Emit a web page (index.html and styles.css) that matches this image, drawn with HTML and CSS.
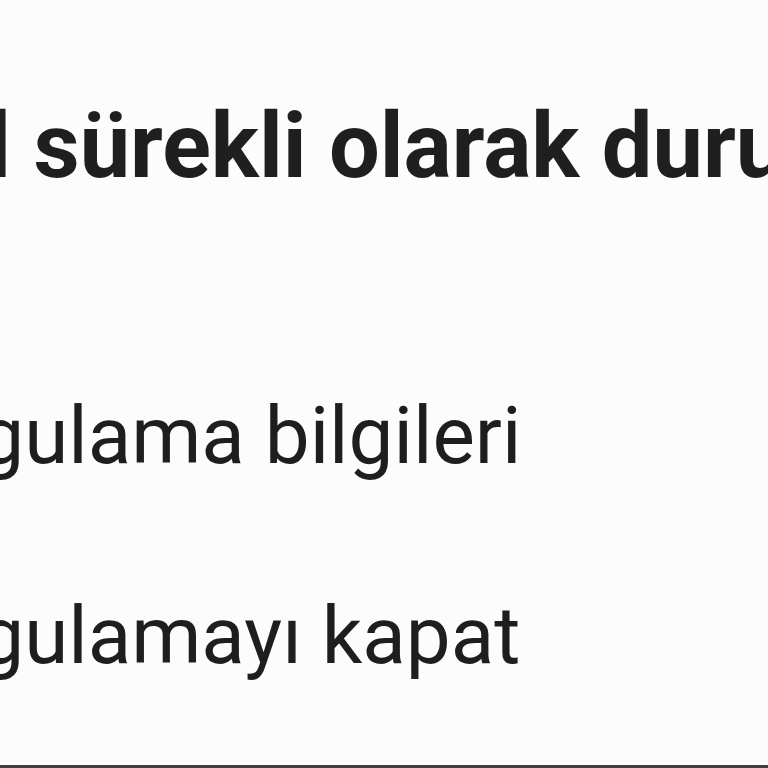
FILE: index.html
```html
<!DOCTYPE html>
<html lang="tr">
<head>
<meta charset="utf-8">
<link rel="stylesheet" href="styles.css">
</head>
<body>
<div class="dialog">
  <h1 class="title">Gmail sürekli olarak duruyor</h1>
  <ul class="actions">
    <li class="action">Uygulama bilgileri</li>
    <li class="action">Uygulamayı kapat</li>
  </ul>
</div>
<div class="navbar"></div>
</body>
</html>
```

FILE: styles.css
```css
html, body {
  margin: 0;
  padding: 0;
  width: 768px;
  height: 768px;
  overflow: hidden;
  background: #fcfcfc;
}
body {
  display: flex;
  flex-direction: column;
  font-family: Roboto, "Noto Sans", sans-serif;
  color: #202020;
}
.dialog {
  flex: 1;
  display: flex;
  flex-direction: column;
  padding-top: 102px;
  overflow: hidden;
}
.title {
  margin: 0 0 0 -224px;
  font-size: 90px;
  font-weight: 700;
  line-height: 90px;
  white-space: nowrap;
  color: #1f1f1f;
}
.actions {
  list-style: none;
  margin: 144px 0 0 -110px;
  padding: 0;
}
.action {
  font-size: 80px;
  font-weight: 400;
  line-height: 200px;
  height: 200px;
  white-space: nowrap;
  color: #1e1e1e;
}
.navbar {
  height: 3px;
  background: #3b4142;
}
```
